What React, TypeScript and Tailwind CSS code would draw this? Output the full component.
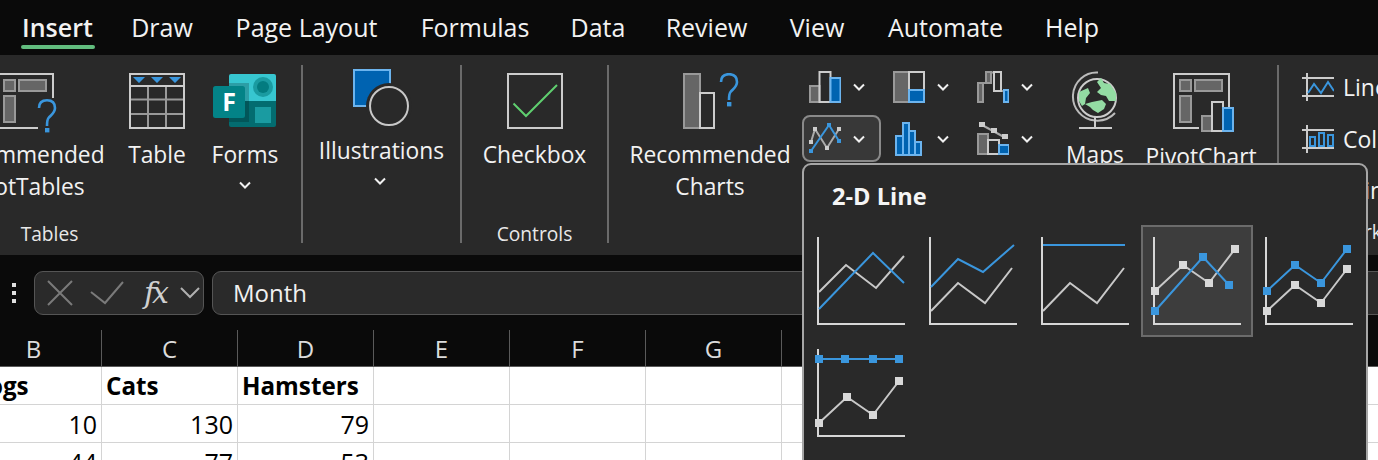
import React from "react";

const Chev = ({ className = "" }: { className?: string }) => (
  <svg width="12" height="8" viewBox="0 0 12 8" className={className} fill="none">
    <path d="M1 1.5 6 6.5 11 1.5" stroke="#f0f0f0" strokeWidth="2" />
  </svg>
);

const Q = ({ x, y }: { x: number; y: number }) => (
  <g transform={`translate(${x} ${y})`}>
    <path d="M2 9C2 4 5 1.2 10 1.2 15 1.2 18 4 18 9 18 14 14 16 11.5 19 10.4 20.4 10 22 10 27" fill="none" stroke="#3a96dd" strokeWidth="2.6" />
    <rect x="8" y="29" width="4.4" height="4.4" fill="#3a96dd" />
  </g>
);

const G = { fill: "#666", stroke: "#999", strokeWidth: 2 };
const W = { fill: "none", stroke: "#ccc", strokeWidth: 2 };
const B = { fill: "#0063b1", stroke: "#6cb4ee", strokeWidth: 2 };

const PivotTableIcon = () => (
  <svg width="56" height="56" viewBox="0 0 56 56" className="overflow-visible ml-[1px]">
    <path d="M41 55H1V1H56V25" fill="none" stroke="#ccc" strokeWidth="2" />
    <rect x="7" y="7" width="11" height="11" {...G} />
    <rect x="22" y="7" width="27" height="11" {...G} />
    <rect x="7" y="23" width="11" height="26" {...G} />
    <Q x={40} y={26} />
  </svg>
);

const PivotChartIcon = () => (
  <svg width="62" height="60" viewBox="0 0 62 60" className="overflow-visible ml-[5px]">
    <path d="M26 55H1V1H56V40" fill="none" stroke="#ccc" strokeWidth="2" />
    <rect x="7" y="7" width="11" height="11" {...G} />
    <rect x="22" y="7" width="27" height="11" {...G} />
    <rect x="7" y="23" width="11" height="26" {...G} />
    <rect x="29" y="43" width="10" height="15" {...G} />
    <rect x="39" y="29" width="11" height="29" fill="#292929" stroke="#ccc" strokeWidth="2" />
    <rect x="50" y="35" width="10" height="23" {...B} />
  </svg>
);

const TableIcon = () => (
  <svg width="56" height="56" viewBox="0 0 56 56">
    <path d="M1 26.5H55M1 41H55M19 13V55M37 13V55" stroke="#999" strokeWidth="2" />
    <rect x="1" y="1" width="54" height="54" fill="none" stroke="#ccc" strokeWidth="2" />
    <path d="M1 13H55" stroke="#ccc" strokeWidth="2" />
    <path d="M4 4H16L10 10ZM22 4H34L28 10ZM40 4H52L46 10Z" fill="#3a96dd" />
  </svg>
);

const FormsIcon = () => (
  <svg width="64" height="56" viewBox="0 0 64 56">
    <path d="M18 1H61A2 2 0 0 1 63 3V28H16V3A2 2 0 0 1 18 1Z" fill="#37c6d0" />
    <path d="M16 28H63V52A2 2 0 0 1 61 54H18A2 2 0 0 1 16 52Z" fill="#036c70" />
    <circle cx="50" cy="14" r="10" fill="#1a9ba1" />
    <circle cx="50" cy="14" r="6" fill="#037c80" />
    <rect x="42" y="34" width="16" height="16" fill="#1a9ba1" />
    <rect x="16" y="10" width="20" height="39" fill="#000" opacity="0.2" />
    <rect x="0" y="13" width="32" height="32" rx="2.5" fill="#038387" />
    <text x="16" y="38" textAnchor="middle" fontFamily="'Open Sans', sans-serif" fontWeight="700" fontSize="25" fill="#fff">F</text>
  </svg>
);

const IllustrationIcon = () => (
  <svg width="60" height="60" viewBox="0 0 60 60" className="ml-[2px]">
    <rect x="1" y="1" width="36" height="36" fill="#0063b1" stroke="#6cb4ee" strokeWidth="2" />
    <circle cx="36" cy="37" r="23" fill="#292929" />
    <circle cx="36" cy="37" r="19" fill="#292929" stroke="#c8c8c8" strokeWidth="2" />
  </svg>
);

const CheckboxIcon = () => (
  <svg width="56" height="56" viewBox="0 0 56 56">
    <rect x="1" y="1" width="54" height="54" fill="none" stroke="#ccc" strokeWidth="2" />
    <path d="M6.5 30.5 19 43 50 12" fill="none" stroke="#5fcf6f" strokeWidth="2" />
  </svg>
);

const RecChartsIcon = () => (
  <svg width="58" height="56" viewBox="0 0 58 56" className="ml-[4px]">
    <rect x="1" y="1" width="16" height="54" {...G} />
    <rect x="17" y="20" width="14" height="35" {...W} />
    <Q x={36} y={0} />
  </svg>
);

const BarIcon = () => (
  <svg width="32" height="32" viewBox="0 0 32 32">
    <rect x="1" y="15" width="9.5" height="16" {...G} />
    <rect x="10.5" y="1" width="11" height="30" {...W} />
    <rect x="21.5" y="7" width="10" height="24" {...B} />
  </svg>
);
const TreeIcon = () => (
  <svg width="32" height="32" viewBox="0 0 32 32">
    <rect x="1" y="1" width="15" height="30" {...G} />
    <rect x="16" y="1" width="15" height="18" {...W} />
    <rect x="16" y="19" width="15" height="12" {...B} />
  </svg>
);
const FallIcon = () => (
  <svg width="32" height="32" viewBox="0 0 32 32">
    <path d="M6 12H9M14 1.5H17M24 20H27" stroke="#999" strokeWidth="2" fill="none" />
    <rect x="1" y="12" width="5" height="19" {...G} />
    <rect x="9" y="1" width="5" height="11" {...G} />
    <rect x="17" y="1" width="7" height="19" {...W} />
    <rect x="27" y="19" width="4.5" height="12" {...B} />
  </svg>
);
const LineSmall = () => (
  <svg width="32" height="32" viewBox="0 0 32 32">
    <path d="M2 19 6 6 18 25 30 6" fill="none" stroke="#aaa" strokeWidth="2" />
    <path d="M0 17H4V21H0ZM4 4H8V8H4ZM16 23H20V27H16ZM28 4H32V8H28Z" fill="#ccc" />
    <path d="M2 28 20 2 30 18" fill="none" stroke="#3a96dd" strokeWidth="2" />
    <path d="M0 26H4V30H0ZM18 0H22V4H18ZM28 16H32V20H28Z" fill="#3a96dd" />
  </svg>
);
const HistoIcon = () => (
  <svg width="32" height="34" viewBox="0 0 32 34">
    <rect x="3" y="14" width="7" height="19" {...B} />
    <rect x="10" y="1" width="6" height="32" {...B} />
    <rect x="16" y="9" width="6" height="24" {...B} />
    <rect x="22" y="20" width="6" height="13" {...B} />
  </svg>
);
const ComboIcon = () => (
  <svg width="32" height="33" viewBox="0 0 32 33">
    <rect x="1" y="12" width="10" height="20" {...G} />
    <rect x="11" y="18" width="11" height="14" {...W} />
    <rect x="22" y="23" width="10" height="9" {...B} />
    <path d="M5 3 27 15" stroke="#aaa" strokeWidth="2" />
    <path d="M2 0H8V5H2ZM14 6H20V11H14ZM25 12H31V17H25Z" fill="#ccc" />
  </svg>
);

const GlobeIcon = () => (
  <svg width="48" height="58" viewBox="0 0 48 58">
    <path d="M27 1.500A23.500 24 0 0 0 24 49.500A24 24 0 0 0 44 42" fill="none" stroke="#bbb" strokeWidth="2" />
    <circle cx="26" cy="27" r="19" fill="#292929" stroke="#ccc" strokeWidth="2" />
    <path d="M26 11 30 7 33 12 39 13 45 22 45 30 38 30 35 25 30 24 26 21 30 17Z" fill="#93dca3" />
    <path d="M8 21 17 17 19 22 15 27 14 33 11 35 8 30Z" fill="#93dca3" />
    <path d="M14 33 21 31 31 29 35 33 33 38 27 42 22 39 19 36Z" fill="#93dca3" />
    <path d="M24 46V57M8 57H41" stroke="#ccc" strokeWidth="2" />
  </svg>
);

const SparkFrame = ({ children }: { children: React.ReactNode }) => (
  <svg width="32" height="28" viewBox="0 0 32 28">
    <path d="M0 5H32M0 23H32M5 0V28" stroke="#ccc" strokeWidth="2" />
    {children}
  </svg>
);

const Axis = () => <path d="M13 12V99H100" fill="none" stroke="#d6d6d6" strokeWidth="2" />;
const Mk = ({ pts, c }: { pts: number[][]; c: string }) => (
  <>
    {pts.map(([x, y], i) => (
      <rect key={i} x={x - 4} y={y - 4} width="8" height="8" fill={c} />
    ))}
  </>
);
const ln = (p: number[][]) => p.map((a) => a.join(" ")).join(" ");
const GR = "#c8c8c8";
const BL = "#3a96dd";
const MG = "#d8d8d8";

const g1 = [[14, 66], [42, 40], [68, 58], [94, 24]];
const b1 = [[14, 86], [62, 32], [88, 60]];
const g2 = [[14, 86], [42, 60], [68, 78], [94, 44]];
const b3 = [[14, 22], [40, 22], [68, 22], [94, 22]];

const Thumb = ({ children, selected }: { children: React.ReactNode; selected?: boolean }) => (
  <div className={selected ? "w-[112px] h-[112px] bg-[#3d3d3d] border-2 border-[#6b6b6b] box-border" : "w-[112px] h-[112px] border-2 border-transparent box-border"}>
    <svg width="112" height="112" viewBox="0 0 112 112" className="-m-[2px]">
      <Axis />
      {children}
    </svg>
  </div>
);

const Line = ({ p, c }: { p: number[][]; c: string }) => <polyline points={ln(p)} fill="none" stroke={c} strokeWidth="2" />;

const SmallBtn = ({ icon, active }: { icon: React.ReactNode; active?: boolean }) => (
  <div className={active ? "w-[79px] h-[47px] flex items-center gap-[12px] pl-[5px] box-border rounded-[8px] border-2 border-[#8a8a8a] bg-[#383838]" : "w-[79px] h-[47px] flex items-center gap-[12px] pl-[5px] box-border border-2 border-transparent"}>
    <div className="w-[32px] h-[34px] flex items-center justify-center">{icon}</div>
    <Chev />
  </div>
);

const Big = ({ icon, lines, w, chev, chevClass = "mt-[10px]", top = "pt-[18px]", h = "h-[56px]", mt = "mt-[10px]" }: { icon: React.ReactNode; lines: string[]; w: string; chev?: boolean; chevClass?: string; top?: string; h?: string; mt?: string }) => (
  <div className={`${w} ${top} flex flex-col items-center shrink-0`}>
    <div className={`${h} flex justify-center`}>{icon}</div>
    <div className={`${mt} text-center text-[22.8px] leading-[32px] whitespace-nowrap text-[#f2f2f2]`}>
      {lines.map((l) => <div key={l}>{l}</div>)}
    </div>
    {chev && <Chev className={chevClass} />}
  </div>
);

const Sep = () => <div className="w-[2px] h-[178px] mt-[10px] bg-[#6a6a6a] shrink-0" />;
const GroupLabel = ({ children }: { children?: React.ReactNode }) => (
  <div className="h-[28px] mt-auto mb-[7px] text-center text-[19.2px] leading-[28px] text-[#e8e8e8] whitespace-nowrap">{children}</div>
);

const tabs: [string, string][] = [
  ["Insert", "w-[71px] mr-[-3px]"], ["Draw", "w-[60px]"], ["Page Layout", "w-[145px]"], ["Formulas", "w-[108px]"], ["Data", "w-[54px]"],
  ["Review", "w-[79px]"], ["View", "w-[58px]"], ["Automate", "w-[115px]"], ["Help", "w-[54px]"],
];

const Row = ({ cells, bold, h = "h-[38px]" }: { cells: string[]; bold?: boolean; h?: string }) => (
  <div className={`flex ${h} border-b border-[#d4d4d4] box-border`}>
    {cells.map((c, i) => (
      <div key={i} className={`w-[136px] shrink-0 border-r border-[#d4d4d4] box-border px-[4px] flex items-center ${bold ? "justify-start font-bold text-[24.2px]" : "justify-end text-[25px]"} leading-[36px] text-black`}>
        {c}
      </div>
    ))}
  </div>
);

const blank = ["", "", "", "", "", "", "", "", ""];

export default function App() {
  return (
    <div className="relative w-[1378px] h-[460px] overflow-hidden bg-[#0a0a0a] font-['Open_Sans',sans-serif]">
      {/* tabs */}
      <div className="h-[55px] bg-[#0a0a0a] flex gap-[42px] pl-[22px] pt-[9px] text-[#f2f2f2] text-[25px] leading-[36px]">
        {tabs.map(([t, w], i) => (
          <div key={t} className={`${w} shrink-0 flex flex-col items-center`}>
            <span className={i === 0 ? "whitespace-nowrap font-semibold" : "whitespace-nowrap"}>{t}</span>
            {i === 0 && <span className="w-[74px] h-[4px] rounded-full bg-[#62bd7e]" />}
          </div>
        ))}
      </div>

      {/* ribbon */}
      <div className="h-[200px] bg-[#292929] flex ml-[-202px] w-[1800px]">
        <div className="w-[503px] shrink-0 flex flex-col">
          <div className="flex justify-end pr-[12px]">
            <Big w="w-[168px] mr-[5px]" icon={<PivotTableIcon />} lines={["Recommended", "PivotTables"]} />
            <Big w="w-[88px]" icon={<TableIcon />} lines={["Table"]} />
            <Big w="w-[88px]" icon={<FormsIcon />} lines={["Forms"]} chev />
          </div>
          <GroupLabel>Tables</GroupLabel>
        </div>
        <Sep />
        <div className="w-[157px] shrink-0 flex flex-col">
          <Big w="w-[157px]" top="pt-[14px]" h="h-[60px]" mt="mt-[6px]" chevClass="mt-[10px] mr-[4px]" icon={<IllustrationIcon />} lines={["Illustrations"]} chev />
        </div>
        <Sep />
        <div className="w-[145px] shrink-0 flex flex-col">
          <Big w="w-[145px]" icon={<CheckboxIcon />} lines={["Checkbox"]} />
          <GroupLabel>Controls</GroupLabel>
        </div>
        <Sep />
        <div className="w-[668px] shrink-0 flex pl-[9px] pr-[11px]">
          <Big w="w-[184px]" icon={<RecChartsIcon />} lines={["Recommended", "Charts"]} />
          <div className="grid grid-cols-[79px_79px_79px] grid-rows-[47px_47px] gap-x-[5px] gap-y-[5px] pt-[8px] w-[252px] shrink-0 content-start">
            <SmallBtn icon={<BarIcon />} />
            <SmallBtn icon={<TreeIcon />} />
            <SmallBtn icon={<FallIcon />} />
            <SmallBtn icon={<LineSmall />} active />
            <SmallBtn icon={<HistoIcon />} />
            <SmallBtn icon={<ComboIcon />} />
          </div>
          <Big w="w-[82px]" top="pt-[16px]" h="h-[58px]" mt="mt-[10px]" icon={<GlobeIcon />} lines={["Maps"]} />
          <Big w="w-[130px]" top="pt-[18px]" h="h-[60px]" mt="mt-[8px]" icon={<PivotChartIcon />} lines={["PivotChart"]} />
        </div>
        <Sep />
        <div className="flex-1 pl-[23px] pt-[18px] text-[23px] leading-[32px] text-[#f2f2f2] flex flex-col">
          <div className="flex items-center gap-[9px] h-[28px]">
            <SparkFrame><path d="M6 22 12 13 19 22 26 11 32 20" transform="translate(0 -2)" fill="none" stroke="#3a96dd" strokeWidth="2" /></SparkFrame>
            <span>Line</span>
          </div>
          <div className="flex items-center gap-[9px] h-[28px] mt-[24px]">
            <SparkFrame><path d="M8 12H13V21H8ZM17 8H22V21H17ZM26 10H31V21H26Z" fill="none" stroke="#3a96dd" strokeWidth="2" /></SparkFrame>
            <span>Column</span>
          </div>
          <div className="flex items-center gap-[9px] h-[28px] mt-[23px]">
            <div className="w-[32px] h-[28px]" />
            <span>Win/Loss</span>
          </div>
          <div className="mt-[14px] ml-[29px] text-[19.2px] leading-[28px] text-[#e8e8e8]">Sparklines</div>
        </div>
      </div>

      {/* formula bar */}
      <div className="h-[75px] flex items-start pt-[16px] bg-[#0a0a0a]">
        <div className="w-[34px] shrink-0 flex flex-col items-center gap-[4px] pt-[12px] pr-[6px]">
          <span className="w-[4px] h-[4px] bg-[#e0e0e0]" />
          <span className="w-[4px] h-[4px] bg-[#e0e0e0]" />
          <span className="w-[4px] h-[4px] bg-[#e0e0e0]" />
        </div>
        <div className="w-[170px] h-[44px] shrink-0 box-border rounded-[9px] border border-[#555] bg-[#2a2a2a] flex items-center pl-[12px]">
          <svg width="26" height="26" viewBox="0 0 26 26"><path d="M1 1 25 25M25 1 1 25" stroke="#7a7a7a" strokeWidth="2" /></svg>
          <svg width="34" height="24" viewBox="0 0 34 24" className="ml-[17px]"><path d="M1 11 15 22 33 1" fill="none" stroke="#7a7a7a" strokeWidth="2" /></svg>
          <span className="ml-[20px] font-['DejaVu_Serif',serif] italic text-[#d0d0d0] text-[30px] leading-[32px] w-[33px] tracking-[-3px]">fx</span>
          <svg width="20" height="12" viewBox="0 0 20 12" className="ml-[3px]"><path d="M1 1 10 10 19 1" fill="none" stroke="#b0b0b0" strokeWidth="2" /></svg>
        </div>
        <div className="ml-[8px] flex-1 h-[44px] box-border rounded-l-[9px] border border-[#555] bg-[#2a2a2a] pl-[20px] text-[24px] leading-[42px] text-[#f0f0f0] mr-[-10px]">Month</div>
      </div>

      {/* column headers */}
      <div className="flex h-[37px] ml-[-34px] border-b border-[#5a5a5a] box-border">
        {["B", "C", "D", "E", "F", "G", "H", "I", "J", "K", "L"].map((c) => (
          <div key={c} className="w-[136px] shrink-0 border-r border-[#5a5a5a] box-border text-center text-[24px] leading-[38px] text-[#dcdcdc]">{c}</div>
        ))}
      </div>

      {/* cells */}
      <div className="bg-white ml-[-34px] w-[1500px] h-[94px]">
        <Row bold cells={["Dogs", "Cats", "Hamsters", ...blank.slice(0, 8)]} />
        <Row cells={["10", "130", "79", ...blank.slice(0, 8)]} />
        <Row cells={["44", "77", "53", ...blank.slice(0, 8)]} />
      </div>

      {/* chart dropdown */}
      <div className="absolute left-[802px] top-[163px] w-[566px] h-[310px] box-border rounded-t-[9px] border-2 border-[#a6a6a6] bg-[#292929]">
        <div className="pl-[28px] pt-[16px] text-[23.6px] leading-[30px] font-bold text-[#f5f5f5]">2-D Line</div>
        <div className="grid grid-cols-[112px_112px_112px_112px_112px] auto-rows-[112px] ml-[1px] mt-[14px]">
          <Thumb>
            <Line p={[[14, 67], [41, 40], [71, 63], [99, 31]]} c={GR} />
            <Line p={[[14, 84], [68, 28], [99, 58]]} c={BL} />
          </Thumb>
          <Thumb>
            <Line p={[[14, 86], [41, 58], [68, 78], [95, 43]]} c={GR} />
            <Line p={[[14, 62], [41, 34], [66, 47], [97, 20]]} c={BL} />
          </Thumb>
          <Thumb>
            <Line p={[[14, 86], [41, 58], [68, 78], [95, 43]]} c={GR} />
            <Line p={[[14, 20], [96, 20]]} c={BL} />
          </Thumb>
          <Thumb selected>
            <Line p={g1} c={GR} />
            <Line p={b1} c={BL} />
            <Mk pts={g1} c={MG} />
            <Mk pts={b1} c={BL} />
          </Thumb>
          <Thumb>
            <Line p={g2} c={GR} />
            <Line p={g1} c={BL} />
            <Mk pts={g2} c={MG} />
            <Mk pts={g1} c={BL} />
          </Thumb>
          <Thumb>
            <Line p={g2} c={GR} />
            <Line p={b3} c={BL} />
            <Mk pts={g2} c={MG} />
            <Mk pts={b3} c={BL} />
          </Thumb>
        </div>
      </div>
    </div>
  );
}
